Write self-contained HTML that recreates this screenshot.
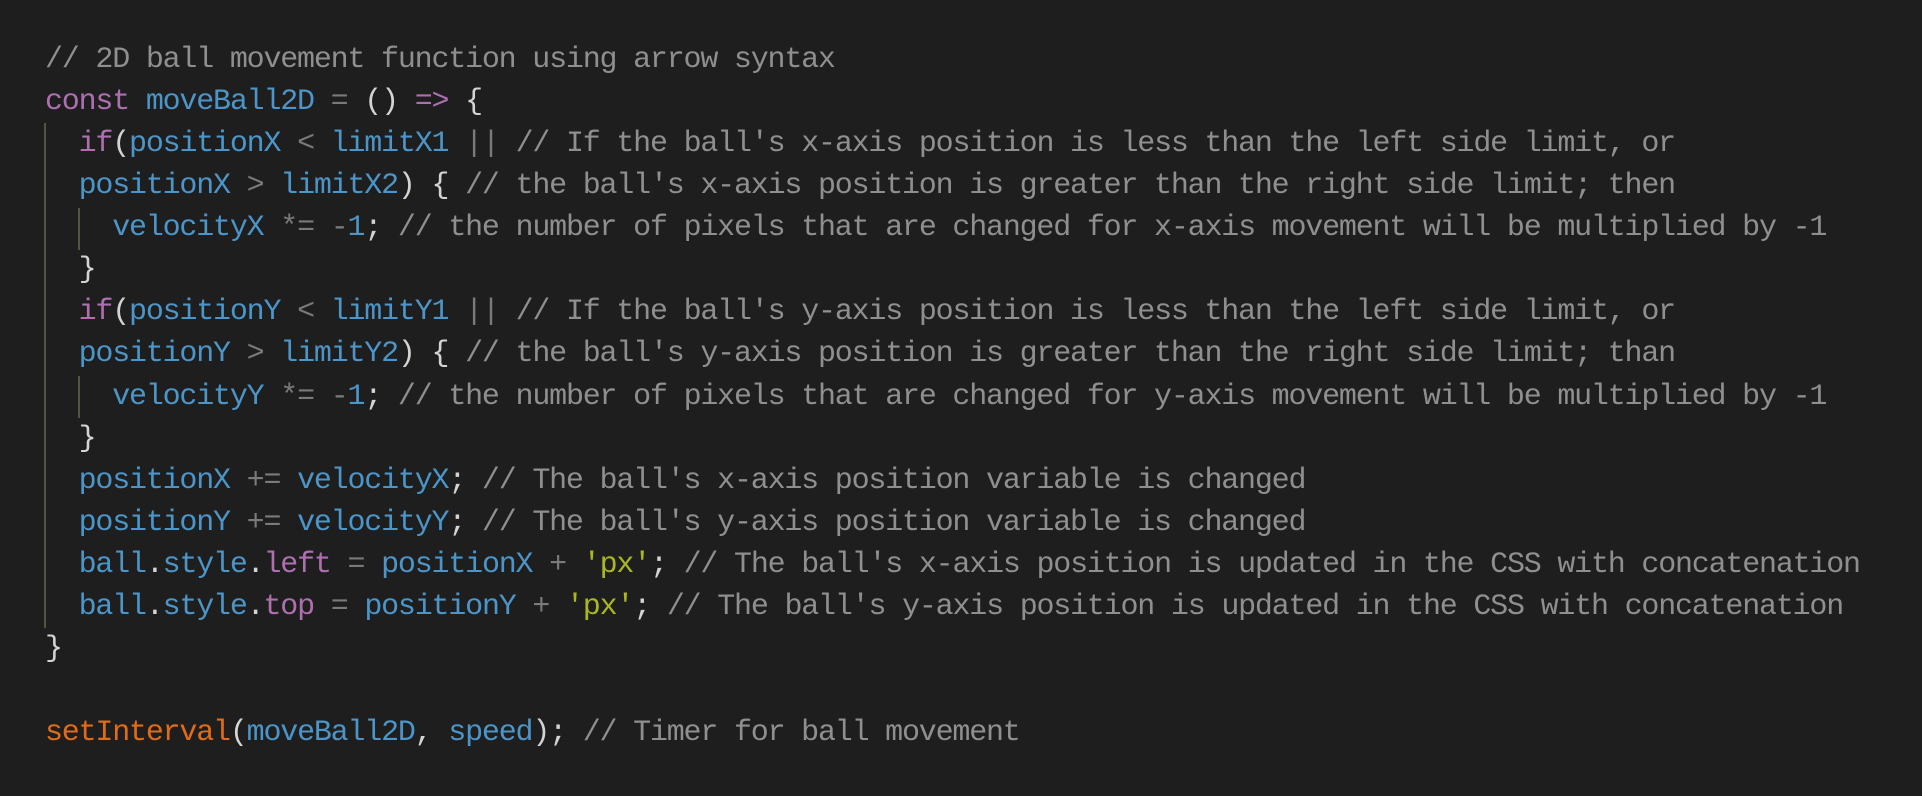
<!DOCTYPE html>
<html><head><meta charset="utf-8"><style>
html,body{margin:0;padding:0;background:#1e1e1e;}
body{width:1922px;height:796px;position:relative;overflow:hidden;}
.code{position:absolute;left:45px;top:39px;font-family:"Liberation Mono",monospace;font-size:30px;letter-spacing:-1.2px;line-height:42.06px;color:#d4d4d4;white-space:pre;}
.c{color:#8f8f8f}.k{color:#ad6fb0}.v{color:#4b95c8}.o{color:#7a7a7a}.s{color:#a9b820}.f{color:#e06c18}
.g{position:absolute;width:2px;}
</style></head><body>
<div class="g" style="left:44px;top:123px;height:505px;background:#545440"></div>
<div class="g" style="left:78px;top:208px;height:42px;background:#545440"></div>
<div class="g" style="left:78px;top:376px;height:42px;background:#545440"></div>
<div class="code"><span class="c">// 2D ball movement function using arrow syntax</span>
<span class="k">const</span> <span class="v">moveBall2D</span> <span class="o">=</span> () <span class="k">=&gt;</span> {
  <span class="k">if</span>(<span class="v">positionX</span> <span class="o">&lt;</span> <span class="v">limitX1</span> <span class="o">||</span> <span class="c">// If the ball's x-axis position is less than the left side limit, or</span>
  <span class="v">positionX</span> <span class="o">&gt;</span> <span class="v">limitX2</span>) { <span class="c">// the ball's x-axis position is greater than the right side limit; then</span>
    <span class="v">velocityX</span> <span class="o">*=</span> <span class="o">-</span><span class="v">1</span>; <span class="c">// the number of pixels that are changed for x-axis movement will be multiplied by -1</span>
  }
  <span class="k">if</span>(<span class="v">positionY</span> <span class="o">&lt;</span> <span class="v">limitY1</span> <span class="o">||</span> <span class="c">// If the ball's y-axis position is less than the left side limit, or</span>
  <span class="v">positionY</span> <span class="o">&gt;</span> <span class="v">limitY2</span>) { <span class="c">// the ball's y-axis position is greater than the right side limit; than</span>
    <span class="v">velocityY</span> <span class="o">*=</span> <span class="o">-</span><span class="v">1</span>; <span class="c">// the number of pixels that are changed for y-axis movement will be multiplied by -1</span>
  }
  <span class="v">positionX</span> <span class="o">+=</span> <span class="v">velocityX</span>; <span class="c">// The ball's x-axis position variable is changed</span>
  <span class="v">positionY</span> <span class="o">+=</span> <span class="v">velocityY</span>; <span class="c">// The ball's y-axis position variable is changed</span>
  <span class="v">ball</span>.<span class="v">style</span>.<span class="k">left</span> <span class="o">=</span> <span class="v">positionX</span> <span class="o">+</span> <span class="s">'px'</span>; <span class="c">// The ball's x-axis position is updated in the CSS with concatenation</span>
  <span class="v">ball</span>.<span class="v">style</span>.<span class="k">top</span> <span class="o">=</span> <span class="v">positionY</span> <span class="o">+</span> <span class="s">'px'</span>; <span class="c">// The ball's y-axis position is updated in the CSS with concatenation</span>
}

<span class="f">setInterval</span>(<span class="v">moveBall2D</span>, <span class="v">speed</span>); <span class="c">// Timer for ball movement</span></div>
</body></html>
